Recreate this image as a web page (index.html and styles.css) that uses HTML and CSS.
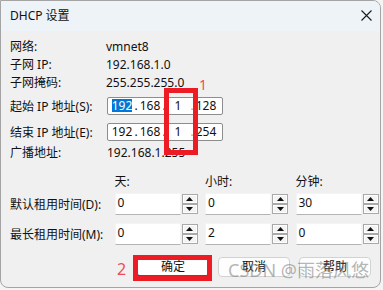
FILE: index.html
```html
<!DOCTYPE html>
<html lang="zh-CN">
<head>
<meta charset="utf-8">
<title>DHCP 设置</title>
<link rel="stylesheet" href="styles.css">
</head>
<body>
<div class="window">
  <div class="titlebar">
    <span class="title">DHCP 设置</span>
    <svg class="close" width="11" height="11" viewBox="0 0 11 11"><path d="M0.5 0.5 L10.5 10.5 M10.5 0.5 L0.5 10.5" stroke="#1a1a1a" stroke-width="1.1" fill="none"/></svg>
  </div>
  <div class="content">
    <div class="info">
      <div class="row"><span class="lbl">网络:</span><span class="val">vmnet8</span></div>
      <div class="row"><span class="lbl">子网 IP:</span><span class="val">192.168.1.0</span></div>
      <div class="row"><span class="lbl">子网掩码:</span><span class="val">255.255.255.0</span></div>
    </div>
    <div class="iprow first">
      <span class="lbl">起始 IP 地址(S):</span>
      <div class="ipbox">
        <span class="seg"><span class="sel">192</span></span><span class="dot">.</span>
        <span class="seg">168</span><span class="dot">.</span>
        <span class="seg">1</span><span class="dot hl">.</span>
        <span class="seg">128</span>
      </div>
    </div>
    <div class="iprow second">
      <span class="lbl">结束 IP 地址(E):</span>
      <div class="ipbox">
        <span class="seg">192</span><span class="dot">.</span>
        <span class="seg">168</span><span class="dot">.</span>
        <span class="seg">1</span><span class="dot hl">.</span>
        <span class="seg">254</span>
      </div>
    </div>
    <div class="row bcast"><span class="lbl">广播地址:</span><span class="val">192.168.1.255</span></div>

    <div class="grid head">
      <span></span><span>天:</span><span>小时:</span><span>分钟:</span>
    </div>
    <div class="grid trow r1">
      <span class="lbl">默认租用时间(D):</span>
      <div class="field"><div class="edit">0</div><div class="spin"><div class="sb"><svg width="7" height="4" viewBox="0 0 7 4"><polygon points="3.5,0 7,4 0,4" fill="#111"/></svg></div><div class="sb"><svg width="7" height="4" viewBox="0 0 7 4"><polygon points="0,0 7,0 3.5,4" fill="#111"/></svg></div></div></div>
      <div class="field"><div class="edit">0</div><div class="spin"><div class="sb"><svg width="7" height="4" viewBox="0 0 7 4"><polygon points="3.5,0 7,4 0,4" fill="#111"/></svg></div><div class="sb"><svg width="7" height="4" viewBox="0 0 7 4"><polygon points="0,0 7,0 3.5,4" fill="#111"/></svg></div></div></div>
      <div class="field"><div class="edit">30</div><div class="spin"><div class="sb"><svg width="7" height="4" viewBox="0 0 7 4"><polygon points="3.5,0 7,4 0,4" fill="#111"/></svg></div><div class="sb"><svg width="7" height="4" viewBox="0 0 7 4"><polygon points="0,0 7,0 3.5,4" fill="#111"/></svg></div></div></div>
    </div>
    <div class="grid trow r2">
      <span class="lbl">最长租用时间(M):</span>
      <div class="field"><div class="edit">0</div><div class="spin"><div class="sb"><svg width="7" height="4" viewBox="0 0 7 4"><polygon points="3.5,0 7,4 0,4" fill="#111"/></svg></div><div class="sb"><svg width="7" height="4" viewBox="0 0 7 4"><polygon points="0,0 7,0 3.5,4" fill="#111"/></svg></div></div></div>
      <div class="field"><div class="edit">2</div><div class="spin"><div class="sb"><svg width="7" height="4" viewBox="0 0 7 4"><polygon points="3.5,0 7,4 0,4" fill="#111"/></svg></div><div class="sb"><svg width="7" height="4" viewBox="0 0 7 4"><polygon points="0,0 7,0 3.5,4" fill="#111"/></svg></div></div></div>
      <div class="field"><div class="edit">0</div><div class="spin"><div class="sb"><svg width="7" height="4" viewBox="0 0 7 4"><polygon points="3.5,0 7,4 0,4" fill="#111"/></svg></div><div class="sb"><svg width="7" height="4" viewBox="0 0 7 4"><polygon points="0,0 7,0 3.5,4" fill="#111"/></svg></div></div></div>
    </div>

    <div class="buttons">
      <div class="btn default">确定</div>
      <div class="btn">取消</div>
      <div class="btn">帮助</div>
    </div>
  </div>

  <div class="mark mark1"></div>
  <div class="mark mark2"></div>
  <span class="num num1">1</span>
  <span class="num num2">2</span>
  <span class="watermark">CSDN @雨落风悠</span>
</div>
</body>
</html>
```

FILE: styles.css
```css
html, body {
  margin: 0;
  padding: 0;
}
body {
  width: 383px;
  height: 290px;
  overflow: hidden;
  background: #f4f4f4;
  font-family: "Noto Sans", "Noto Sans CJK SC", sans-serif;
  font-size: 12px;
  color: #111;
}
.window {
  position: relative;
  width: 381px;
  height: 288px;
  box-sizing: border-box;
  border: 1px solid #a4a4a4;
  border-radius: 0 8px 8px 8px;
  background: #f0f0f0;
  overflow: hidden;
  display: flex;
  flex-direction: column;
}
.titlebar {
  height: 30px;
  flex: none;
  background: #eef3f8;
  display: flex;
  align-items: center;
  justify-content: space-between;
  padding: 0 8px 0 9px;
}
.title {
  line-height: 30px;
  color: #111;
}
.close {
  display: block;
  margin-top: -1px;
}
.content {
  padding: 7px 9px 0 9px;
  display: flex;
  flex-direction: column;
}
.row {
  display: flex;
  align-items: center;
  height: 18px;
  line-height: 18px;
}
.lbl {
  width: 97px;
  flex: none;
  white-space: nowrap;
}
.info .lbl {
  width: 96px;
}
.iprow {
  display: flex;
  align-items: center;
  height: 18px;
}
.iprow.first { margin-top: 5px; }
.iprow.second { margin-top: 8px; }
.ipbox {
  width: 116px;
  height: 18px;
  box-sizing: border-box;
  border: 1px solid #8d8d8d;
  border-radius: 2px;
  background: #fff;
  display: flex;
  align-items: center;
  padding-left: 3.5px;
  line-height: 14px;
}
.seg {
  width: 21px;
  text-align: center;
  flex: none;
}
.sel {
  background: #0078d7;
  color: #fff;
  display: inline-block;
  line-height: 13px;
}
.dot {
  width: 7px;
  text-align: center;
  flex: none;
}
.dot.hl {
  color: #d9a441;
}
.bcast {
  margin-top: 3px;
}
.grid {
  display: grid;
  grid-template-columns: 97px 83px 83px 83px;
  column-gap: 7.5px;
  align-items: center;
}
.head {
  margin-top: 11px;
  height: 18px;
  line-height: 18px;
}
.trow {
  height: 22px;
}
.trow.r1 { margin-top: 2px; }
.trow.r2 { margin-top: 8px; }
.field {
  display: flex;
  align-items: center;
  gap: 1px;
  height: 22px;
}
.edit {
  width: 66px;
  height: 22px;
  box-sizing: border-box;
  background: #fff;
  border: 1px solid #f4f4f4;
  border-bottom: 1px solid #b4b4b4;
  padding-left: 2px;
  line-height: 18px;
}
.spin {
  width: 16px;
  display: flex;
  flex-direction: column;
}
.sb {
  height: 10px;
  box-sizing: border-box;
  border: 1px solid #a9a9a9;
  background: #f3f3f3;
  box-shadow: inset 0 0 0 1px #fdfdfd;
  display: flex;
  align-items: center;
  justify-content: center;
}
.sb svg {
  display: block;
}
.buttons {
  display: flex;
  justify-content: flex-end;
  gap: 9px;
  margin-top: 12px;
}
.btn {
  width: 72px;
  height: 20px;
  box-sizing: border-box;
  border: 1px solid #d2d2d2;
  border-radius: 4px;
  background: #fdfdfd;
  text-align: center;
  line-height: 18px;
  color: #111;
}
.btn.default {
  background: #fff;
  border-color: #c8d6e6;
  border-bottom: 2px solid #1a5fb4;
  line-height: 17px;
}
.mark {
  position: absolute;
  box-sizing: border-box;
  border: 5px solid #ed1c24;
}
.mark1 {
  left: 163px;
  top: 87px;
  width: 34px;
  height: 67px;
}
.mark2 {
  left: 132px;
  top: 254px;
  width: 79px;
  height: 26px;
}
.num {
  position: absolute;
  line-height: 1;
  color: #f04a55;
}
.num1 {
  left: 198px;
  top: 77px;
  font-size: 14px;
}
.num2 {
  left: 116px;
  top: 260px;
  font-size: 16px;
}
.watermark {
  position: absolute;
  left: 227px;
  top: 260px;
  font-size: 18px;
  line-height: 1;
  color: rgba(120, 120, 120, 0.55);
  white-space: nowrap;
}
```
